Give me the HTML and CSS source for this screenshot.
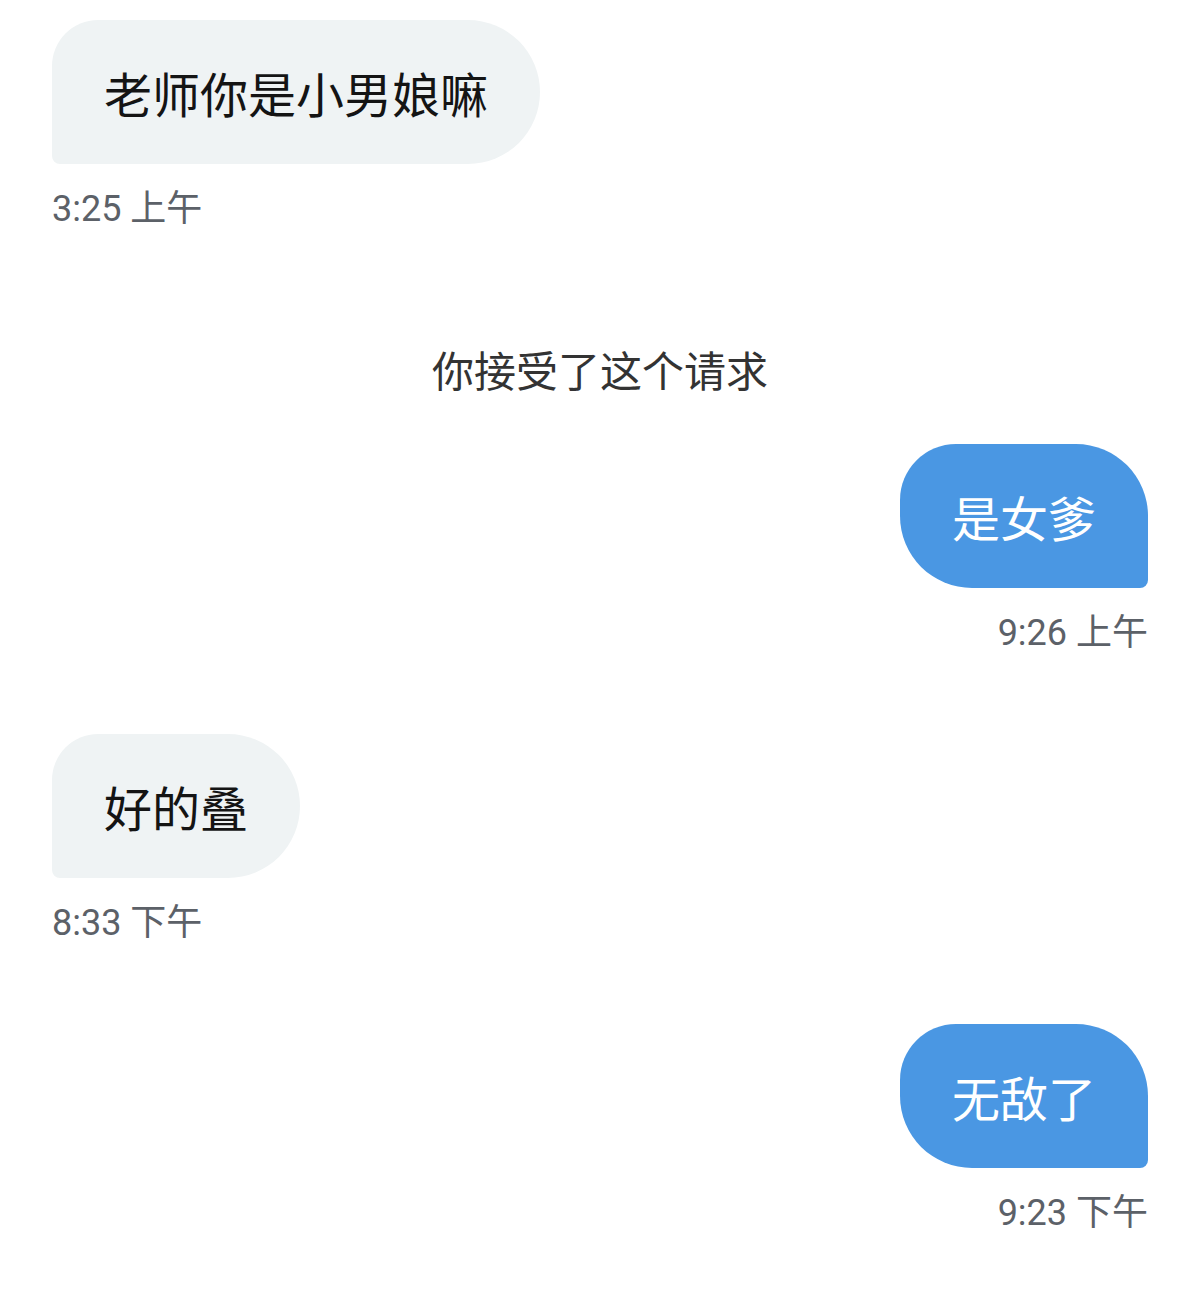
FILE: index.html
```html
<!DOCTYPE html>
<html lang="zh-CN">
<head>
    <meta charset="UTF-8">
    <meta name="viewport" content="width=device-width, initial-scale=1.0">
    <title>聊天</title>
    <link rel="stylesheet" href="styles.css">
</head>
<body>
    <div class="chat">
        <div class="msg msg-in">
            <div class="bubble">老师你是小男娘嘛</div>
            <span class="time">3:25 上午</span>
        </div>

        <div class="system">你接受了这个请求</div>

        <div class="msg msg-out">
            <div class="bubble">是女爹</div>
            <span class="time">9:26 上午</span>
        </div>

        <div class="msg msg-in">
            <div class="bubble">好的叠</div>
            <span class="time">8:33 下午</span>
        </div>

        <div class="msg msg-out">
            <div class="bubble">无敌了</div>
            <span class="time">9:23 下午</span>
        </div>
    </div>
</body>
</html>
```

FILE: styles.css
```css
body {
    margin: 0;
    background-color: #fff;
    font-family: Roboto, "Noto Sans CJK SC", sans-serif;
}
.chat {
    display: flex;
    flex-direction: column;
    padding: 20px 52px 40px;
}
.msg {
    display: flex;
    flex-direction: column;
    gap: 25px;
}
.msg + .msg {
    margin-top: 81px;
}
.msg-in {
    align-items: flex-start;
}
.msg-out {
    align-items: flex-end;
}
.bubble {
    font-size: 48px;
    line-height: 48px;
    padding: 48px 52px;
    font-family: "Noto Sans CJK SC", sans-serif;
}
.msg-in .bubble {
    background-color: #eff3f4;
    color: #141414;
    border-radius: 46px 72px 72px 8px;
}
.msg-out .bubble {
    background-color: #4a97e3;
    color: #fff;
    border-radius: 56px 72px 8px 72px;
}
.time {
    font-size: 36px;
    line-height: 40px;
    color: #5c6168;
}
.system {
    margin: 115px 0 50px;
    text-align: center;
    font-size: 42px;
    line-height: 50px;
    color: #333;
    font-family: "Noto Sans CJK SC", sans-serif;
}
```
